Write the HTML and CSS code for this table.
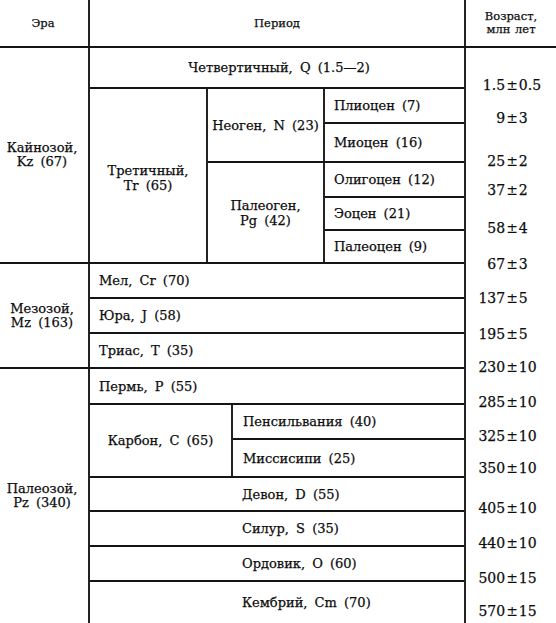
FILE: index.html
```html
<!DOCTYPE html>
<html lang="ru">
<head>
<meta charset="utf-8">
<title>Геохронологическая шкала</title>
<link rel="stylesheet" href="styles.css">
</head>
<body>
<div class="table">
  <div class="head">
    <div class="h-era">Эра</div>
    <div class="h-period">Период</div>
    <div class="h-age">Возраст,<br>млн лет</div>
  </div>
  <div class="body">
    <div class="main">
      <div class="era kz">
        <div class="era-name">Кайнозой,<br>Kz (67)</div>
        <div class="periods">
          <div class="row quat center">Четвертичный, Q (1.5—2)</div>
          <div class="tert">
            <div class="group-name tert-name">Третичный,<br>Tr (65)</div>
            <div class="subs">
              <div class="neo">
                <div class="group-name sub-name">Неоген, N (23)</div>
                <div class="epochs">
                  <div class="row ep plio">Плиоцен (7)</div>
                  <div class="row ep mio">Миоцен (16)</div>
                </div>
              </div>
              <div class="paleo">
                <div class="group-name sub-name">Палеоген,<br>Pg (42)</div>
                <div class="epochs">
                  <div class="row ep oligo">Олигоцен (12)</div>
                  <div class="row ep eoc">Эоцен (21)</div>
                  <div class="row ep paleoc">Палеоцен (9)</div>
                </div>
              </div>
            </div>
          </div>
        </div>
      </div>
      <div class="era mz">
        <div class="era-name">Мезозой,<br>Mz (163)</div>
        <div class="periods">
          <div class="row left mel">Мел, Cr (70)</div>
          <div class="row left jura">Юра, J (58)</div>
          <div class="row left trias">Триас, T (35)</div>
        </div>
      </div>
      <div class="era pz">
        <div class="era-name">Палеозой,<br>Pz (340)</div>
        <div class="periods">
          <div class="row left perm">Пермь, P (55)</div>
          <div class="carbon">
            <div class="group-name carb-name">Карбон, C (65)</div>
            <div class="carb-subs">
              <div class="row ep2 penn">Пенсильвания (40)</div>
              <div class="row ep2 miss">Миссисипи (25)</div>
            </div>
          </div>
          <div class="row late devon">Девон, D (55)</div>
          <div class="row late silur">Силур, S (35)</div>
          <div class="row late ordo">Ордовик, O (60)</div>
          <div class="row late camb">Кембрий, Cm (70)</div>
        </div>
      </div>
    </div>
    <div class="ages">
      <div class="age"><span class="a">1.5</span><span class="pm">±</span><span class="b">0.5</span></div>
      <div class="age"><span class="a">9</span><span class="pm">±</span><span class="b">3</span></div>
      <div class="age"><span class="a">25</span><span class="pm">±</span><span class="b">2</span></div>
      <div class="age"><span class="a">37</span><span class="pm">±</span><span class="b">2</span></div>
      <div class="age"><span class="a">58</span><span class="pm">±</span><span class="b">4</span></div>
      <div class="age"><span class="a">67</span><span class="pm">±</span><span class="b">3</span></div>
      <div class="age"><span class="a">137</span><span class="pm">±</span><span class="b">5</span></div>
      <div class="age"><span class="a">195</span><span class="pm">±</span><span class="b">5</span></div>
      <div class="age"><span class="a">230</span><span class="pm">±</span><span class="b">10</span></div>
      <div class="age"><span class="a">285</span><span class="pm">±</span><span class="b">10</span></div>
      <div class="age"><span class="a">325</span><span class="pm">±</span><span class="b">10</span></div>
      <div class="age"><span class="a">350</span><span class="pm">±</span><span class="b">10</span></div>
      <div class="age"><span class="a">405</span><span class="pm">±</span><span class="b">10</span></div>
      <div class="age"><span class="a">440</span><span class="pm">±</span><span class="b">10</span></div>
      <div class="age"><span class="a">500</span><span class="pm">±</span><span class="b">15</span></div>
      <div class="age"><span class="a">570</span><span class="pm">±</span><span class="b">15</span></div>
    </div>
  </div>
</div>
</body>
</html>
```

FILE: styles.css
```css
* { box-sizing: border-box; }
html, body { margin: 0; padding: 0; background: #fff; }
body {
  font-family: "DejaVu Serif", "Liberation Serif", serif;
  font-size: 13px;
  color: #0d0d0d;
  word-spacing: 3px;
  -webkit-text-stroke: 0.25px #0d0d0d;
}
.table { width: 556px; height: 623px; display: flex; flex-direction: column; }

/* header */
.head {
  height: 48px;
  display: flex;
  border-bottom: 2px solid #151515;
  font-size: 11.5px;
}
.h-era {
  width: 90px;
  border-right: 2px solid #222;
  display: flex; align-items: center; justify-content: center;
  padding-right: 2px;
}
.h-period {
  flex: 1;
  display: flex; align-items: center; justify-content: center;
}
.h-age {
  width: 92px;
  border-left: 2px solid #222;
  display: flex; align-items: center; justify-content: center;
  text-align: center;
  line-height: 13px;
  word-spacing: 1px;
}

/* body */
.body { flex: 1; display: flex; }
.main { width: 464px; display: flex; flex-direction: column; }
.era { display: flex; border-bottom: 2px solid #151515; }
.era.pz { border-bottom: none; flex: 1; }
.kz { height: 216px; }
.mz { height: 105px; }
.era-name {
  width: 90px;
  border-right: 2px solid #222;
  display: flex; align-items: center; justify-content: center;
  text-align: center;
  line-height: 14px;
  padding-right: 4px;
}
.periods { flex: 1; display: flex; flex-direction: column; }

.row {
  display: flex; align-items: center;
  border-bottom: 2px solid #151515;
}
.row:last-child { border-bottom: none; }
.center { justify-content: center; }
.left { padding-left: 9px; }
.ep { padding-left: 9px; }
.ep2 { padding-left: 10px; }
.late { padding-left: 152px; }

.quat { height: 41px; padding-left: 4px; }
.tert { flex: 1; display: flex; }
.group-name {
  display: flex; align-items: center; justify-content: center;
  text-align: center;
  line-height: 15px;
  border-right: 2px solid #222;
}
.tert-name { width: 118px; padding-top: 4px; }
.subs { flex: 1; display: flex; flex-direction: column; }
.neo { height: 74px; display: flex; border-bottom: 2px solid #151515; }
.paleo { flex: 1; display: flex; }
.sub-name { width: 117px; }
.epochs { flex: 1; display: flex; flex-direction: column; }
.plio { height: 35px; }
.mio { flex: 1; }
.oligo { height: 35px; }
.eoc { height: 33px; }
.paleoc { flex: 1; }

.mel { height: 35px; }
.jura { height: 35px; }
.trias { flex: 1; }

.perm { height: 36px; }
.carbon { height: 73px; display: flex; border-bottom: 2px solid #151515; }
.carb-name { width: 143px; }
.carb-subs { flex: 1; display: flex; flex-direction: column; }
.penn { height: 35px; }
.miss { flex: 1; }
.devon { height: 34px; }
.silur { height: 35px; }
.ordo { height: 35px; }
.camb { flex: 1; }

/* ages */
.ages {
  width: 92px;
  border-left: 2px solid #222;
  display: grid;
  padding-top: 29px;
  grid-template-rows: 33px 43px 29px 38px 36px 34px 36px 33px 35px 34px 32px 40px 35px 35px 33px auto;
  align-content: start;
  font-size: 14px;
}
.age {
  display: grid;
  grid-template-columns: 1fr auto 1fr;
  line-height: 16px;
  height: 16px;
  word-spacing: 0;
  padding-left: 2px;
}
.age .a { justify-self: end; }
.age .pm { padding: 0 1px; -webkit-text-stroke: 0; }
.age .b { justify-self: start; }
```
